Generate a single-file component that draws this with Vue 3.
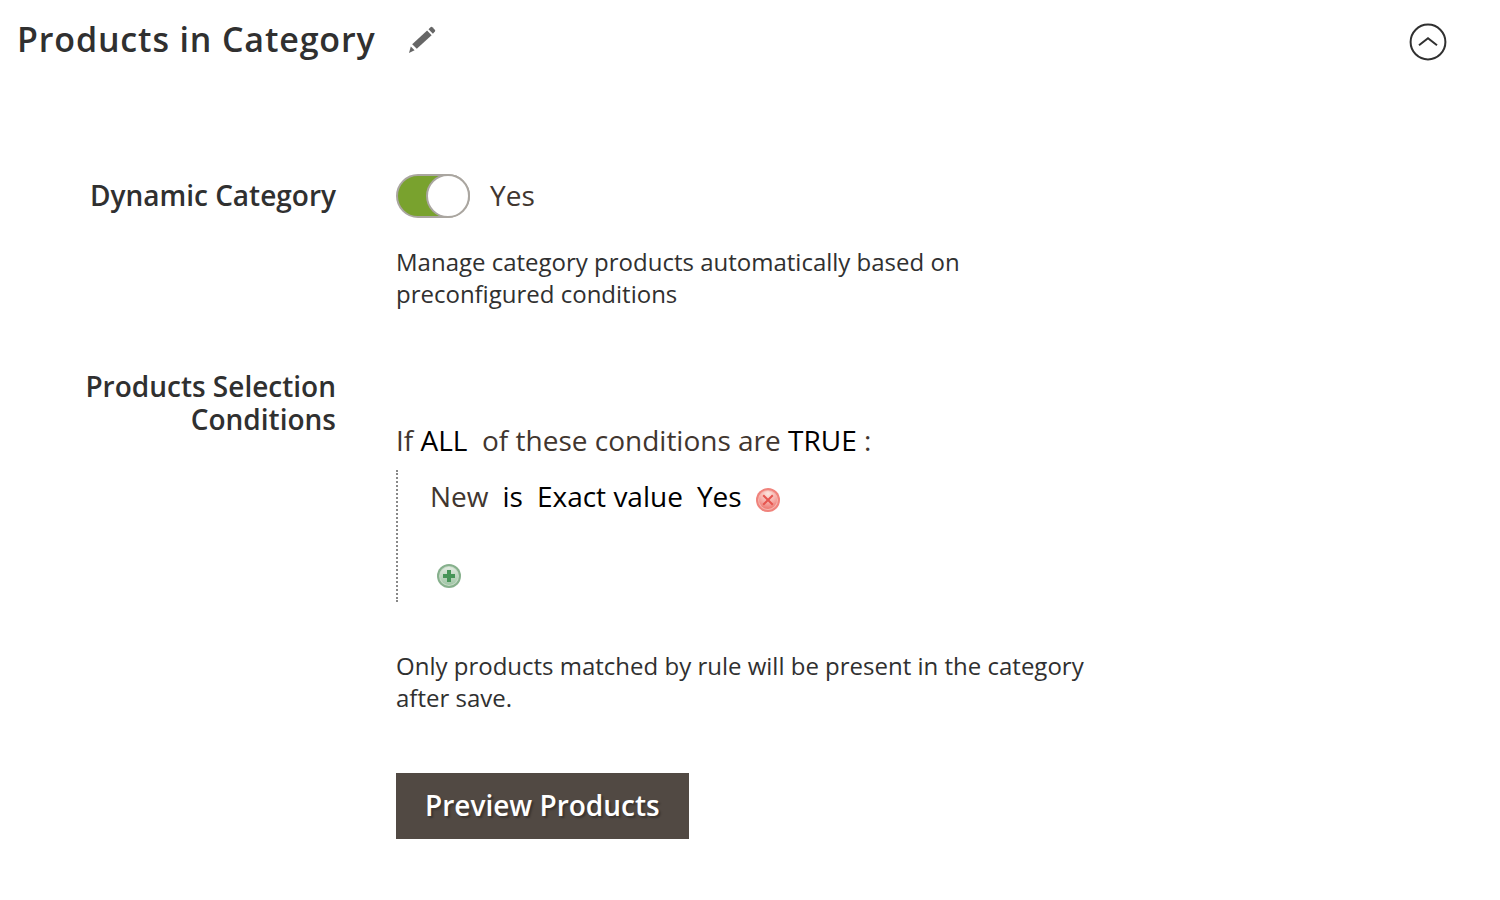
<script setup>
import { ref } from 'vue'

const open = ref(true)
const dynamic = ref(true)
const conditions = ref([
  { attribute: 'New', operator: 'is', source: 'Exact value', value: 'Yes' },
])

function addCondition() {
  conditions.value.push({ attribute: 'New', operator: 'is', source: 'Exact value', value: 'Yes' })
}

function removeCondition(index) {
  conditions.value.splice(index, 1)
}
</script>

<template>
  <section class="panel">
    <header class="panel-header">
      <h2 class="title">Products in Category</h2>
      <button class="icon-button" type="button" aria-label="Edit">
        <svg width="28" height="28" viewBox="0 0 28 28" fill="#666">
          <path d="M4.2 18.2 19.1 4.6 23.6 9.2 8.8 22.8Z" />
          <path d="M20.5 3.3 22.8 1.1Q23.6.4 24.4 1.2L27 4Q27.6 4.8 26.9 5.6L24.9 7.8Z" />
          <path d="M2.8 20.4 6.6 24.2 1 26.9Z" />
        </svg>
      </button>
      <button
        class="icon-button collapse"
        type="button"
        aria-label="Toggle section"
        :aria-expanded="open"
        @click="open = !open"
      >
        <svg width="38" height="38" viewBox="0 0 38 38" fill="none" stroke="#303030" stroke-width="2">
          <circle cx="19" cy="19" r="17.4" />
          <path d="M10 22.2 19 15.2 28 22.2" />
        </svg>
      </button>
    </header>

    <form v-if="open" class="fields" @submit.prevent>
      <div class="field">
        <label class="label toggle-line" for="dynamic-category">Dynamic Category</label>
        <div class="control">
          <div class="toggle-line">
            <input id="dynamic-category" v-model="dynamic" class="toggle" type="checkbox" />
            <span>{{ dynamic ? 'Yes' : 'No' }}</span>
          </div>
          <p class="note">Manage category products automatically based on preconfigured conditions</p>
        </div>
      </div>

      <div class="field">
        <div id="conditions-label" class="label">Products Selection Conditions</div>
        <div class="control conditions" role="group" aria-labelledby="conditions-label">
          <p class="rule">If <a href="#">ALL</a>&nbsp; of these conditions are <a href="#">TRUE</a> :</p>
          <ul class="tree">
            <li v-for="(item, index) in conditions" :key="index" class="condition">
              <span>{{ item.attribute }}</span>
              <a href="#">{{ item.operator }}</a>
              <a href="#">{{ item.source }}</a>
              <a href="#">{{ item.value }}</a>
              <button class="icon-button remove" type="button" aria-label="Remove" @click="removeCondition(index)">
                <svg width="24" height="24" viewBox="0 0 24 24">
                  <defs>
                    <radialGradient id="red-face" cx=".5" cy=".15" r=".85">
                      <stop offset="0" stop-color="#fbe6df" />
                      <stop offset=".55" stop-color="#f6b0aa" />
                      <stop offset="1" stop-color="#ee7770" />
                    </radialGradient>
                  </defs>
                  <circle cx="12" cy="12" r="12" fill="#f0837c" />
                  <circle cx="12" cy="12" r="10" fill="#f6b5ae" />
                  <circle cx="12" cy="12" r="9" fill="url(#red-face)" />
                  <path d="M7.2 7.2 16.8 16.8M16.8 7.2 7.2 16.8" stroke="#e6554f" stroke-width="2" />
                </svg>
              </button>
            </li>
            <li class="add-line">
              <button class="icon-button" type="button" aria-label="Add" @click="addCondition">
                <svg width="24" height="24" viewBox="0 0 24 24">
                  <defs>
                    <linearGradient id="green-face" x1="0" y1="0" x2="0" y2="1">
                      <stop offset="0" stop-color="#e2ebe1" />
                      <stop offset="1" stop-color="#9fc5a5" />
                    </linearGradient>
                  </defs>
                  <circle cx="12" cy="12" r="12" fill="#86b08c" />
                  <circle cx="12" cy="12" r="10" fill="#c5dac6" />
                  <circle cx="12" cy="12" r="9" fill="url(#green-face)" />
                  <path d="M10 6H14V10H18V14H14V18H10V14H6V10H10Z" fill="#479558" />
                </svg>
              </button>
            </li>
          </ul>
          <p class="note">Only products matched by rule will be present in the category after save.</p>
          <button class="preview" type="button">Preview Products</button>
        </div>
      </div>
    </form>
  </section>
</template>

<style>
body {
  background: #fff;
}
</style>

<style scoped>
.panel {
  padding: 16px 53px 60px 17px;
  color: #41362f;
  font-family: "Open Sans", sans-serif;
  font-size: 28px;
  line-height: 33px;
}

.panel-header {
  display: flex;
  align-items: center;
  gap: 32px;
  height: 48px;
}

.title {
  margin: 0;
  color: #303030;
  font-size: 34px;
  font-weight: 600;
  line-height: 46px;
  padding-bottom: 2px;
  letter-spacing: 0.025em;
}

.icon-button {
  display: block;
  padding: 0;
  border: 0;
  background: none;
  cursor: pointer;
}

.icon-button svg {
  display: block;
}

.collapse {
  margin: 4px 0 0 auto;
}

.fields {
  display: grid;
  gap: 60px;
  padding-top: 110px;
}

.field {
  display: grid;
  grid-template-columns: 319px minmax(0, 700px);
  column-gap: 60px;
}

.label {
  color: #303030;
  font-weight: 600;
  text-align: right;
}

.toggle-line {
  display: flex;
  align-items: center;
  gap: 20px;
  height: 44px;
  line-height: 32px;
}

.toggle-line span {
  padding-bottom: 2px;
}

.label.toggle-line {
  box-sizing: border-box;
  justify-content: flex-end;
  padding-bottom: 2px;
}

.toggle {
  appearance: none;
  display: flex;
  width: 74px;
  height: 44px;
  margin: 0;
  border: 2px solid #aaa6a0;
  border-radius: 22px;
  background: #fff;
  cursor: pointer;
}

.toggle::before {
  content: "";
  box-sizing: border-box;
  width: 44px;
  height: 44px;
  margin: -2px;
  border: 2px solid #aaa6a0;
  border-radius: 50%;
  background: #fff;
}

.toggle:checked {
  justify-content: flex-end;
  background: #79a22e;
}

.note {
  margin: 0;
  padding-top: 28px;
  color: #303030;
  font-size: 24px;
  line-height: 32px;
}

a {
  color: #000;
  text-decoration: none;
}

.conditions {
  padding-top: 54px;
}

.rule {
  margin: 0;
}

.tree {
  margin: 13px 0 20px;
  padding: 0 0 0 32px;
  border-left: 2px dotted #888;
  list-style: none;
}

.condition {
  display: flex;
  align-items: center;
  gap: 14px;
  height: 52px;
}

.remove {
  margin-top: 8px;
}

.add-line {
  padding: 42px 7px 14px;
}

.preview {
  display: block;
  margin-top: 59px;
  padding: 0 29px 2px;
  border: 0;
  background: #514943;
  color: #fff;
  font: 600 28px/64px "Open Sans", sans-serif;
  text-shadow: 2px 2px 2px rgba(0, 0, 0, 0.3);
  cursor: pointer;
}
</style>
